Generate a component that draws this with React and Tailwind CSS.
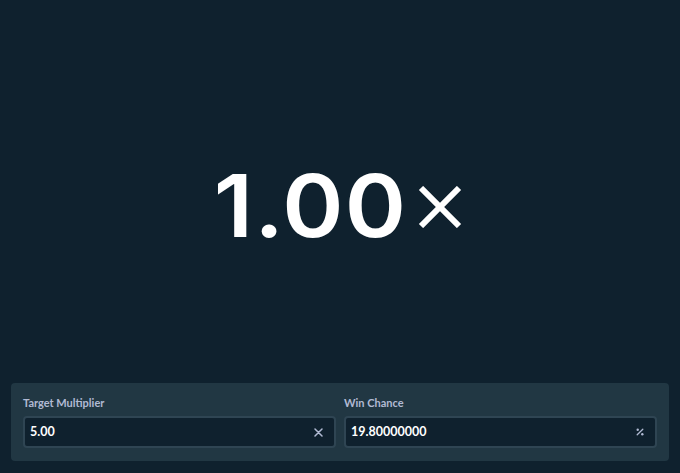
import React from "react";

function XIcon() {
  return (
    <svg width="9" height="9" viewBox="0 0 9 9" fill="none">
      <path d="M1 1L8 8M8 1L1 8" stroke="#b1bad3" strokeWidth="1.5" strokeLinecap="round" />
    </svg>
  );
}

function PercentIcon() {
  return (
    <svg width="8" height="8" viewBox="0 0 8 8" fill="none">
      <path d="M6.8 1.2L1.2 6.8" stroke="#b1bad3" strokeWidth="1.3" strokeLinecap="round" />
      <circle cx="1.7" cy="1.7" r="1.2" fill="#b1bad3" />
      <circle cx="6.3" cy="6.3" r="1.2" fill="#b1bad3" />
    </svg>
  );
}

function Field({ label, value, icon }) {
  return (
    <div className="flex flex-col">
      <div className="text-[11px] leading-4 font-bold text-[#b1bad3] mb-[5px]">{label}</div>
      <div className="h-8 rounded-[4px] bg-[#0f212e] border-2 border-[#2f4553] flex items-center pl-[5px] pr-[11px]">
        <span className="flex-1 text-white text-[12.5px] font-bold">{value}</span>
        {icon}
      </div>
    </div>
  );
}

export default function App() {
  return (
    <div
      className="w-[680px] h-[473px] bg-[#0f212e] flex flex-col overflow-hidden"
      style={{ fontFamily: "Lato, 'Noto Sans', sans-serif" }}
    >
      <div className="flex-1 flex items-center justify-center pt-[28px] pl-[3px]">
        <div className="flex items-center">
          <span
            className="text-white text-[86px] font-semibold leading-none inline-block scale-x-[1.08] tracking-[1px]"
            style={{ fontFamily: "Inter, sans-serif" }}
          >
            1.00
          </span>
          <svg width="44" height="42" viewBox="0 0 44 42" className="ml-[18px] mt-[2px]">
            <path d="M3 2L41 40M41 2L3 40" stroke="#ffffff" strokeWidth="6" />
          </svg>
        </div>
      </div>
      <div className="mx-[11px] mb-3 rounded-[4px] bg-[#213743] px-3 pt-3 pb-[13px] grid grid-cols-2 gap-2">
        <Field label="Target Multiplier" value="5.00" icon={<XIcon />} />
        <Field label="Win Chance" value="19.80000000" icon={<PercentIcon />} />
      </div>
    </div>
  );
}
